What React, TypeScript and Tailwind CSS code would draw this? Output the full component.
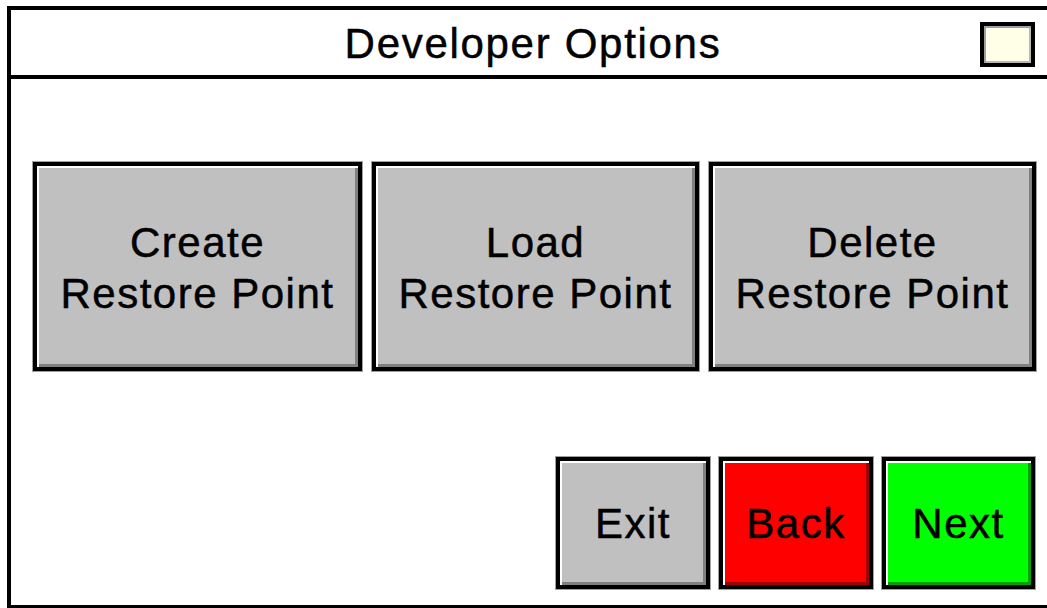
import React from "react";

const font = { fontFamily: '"Liberation Sans", Arial, sans-serif' };

function BigButton({ l1, l2, w }: { l1: string; l2: string; w: string }) {
  return (
    <div
      className={`${w} h-[209px] border-4 border-black bg-[#c0c0c0] shadow-[inset_2px_2px_0_#ffffff,inset_-3px_-3px_0_#808080,0_0_0_1px_#a0a0a0] flex items-center justify-center`}
    >
      <div className="text-center text-[42px] leading-[51px] tracking-[1.5px] text-black [-webkit-text-stroke:0.5px_black] pt-[2px]">
        <div>{l1}</div>
        <div>{l2}</div>
      </div>
    </div>
  );
}

function SmallButton({ label, cls, w }: { label: string; cls: string; w: string }) {
  return (
    <div
      className={`${w} h-[132px] border-4 border-black ${cls} flex items-center justify-center`}
    >
      <span className="text-[42px] leading-[51px] tracking-[1.5px] text-black [-webkit-text-stroke:0.5px_black]">{label}</span>
    </div>
  );
}

export default function App() {
  return (
    <div className="w-[1047px] h-[608px] bg-white overflow-hidden" style={font}>
      <div className="ml-[7px] mt-[6px] w-[1060px] h-[602px] border-l-4 border-t-4 border-b-[3px] border-black flex flex-col">
        <div className="h-[69px] border-b-4 border-black flex items-start relative">
          <div className="flex-1 text-center text-[42px] leading-[48px] tracking-[1.7px] text-black [-webkit-text-stroke:0.5px_black] pt-[10px] pr-[12px]">
            Developer Options
          </div>
          <div className="absolute left-[969px] top-[12px] w-[55px] h-[45px] border-4 border-black bg-[#ffffe8] shadow-[inset_2px_2px_0_#a0a0a0,inset_-2px_-2px_0_#b8b8b8]" />
        </div>
        <div className="flex-1 pl-[22px] pt-[83px]">
          <div className="w-[1003px]">
            <div className="flex gap-[10px]">
              <BigButton l1="Create" l2="Restore Point" w="w-[329px]" />
              <BigButton l1="Load" l2="Restore Point" w="w-[327px]" />
              <BigButton l1="Delete" l2="Restore Point" w="w-[327px]" />
            </div>
            <div className="flex justify-end gap-[9px] mt-[86px] pr-[1px]">
              <SmallButton
                label="Exit"
                w="w-[154px]"
                cls="bg-[#c0c0c0] shadow-[inset_2px_2px_0_#ffffff,inset_-3px_-3px_0_#808080,0_0_0_1px_#a0a0a0]"
              />
              <SmallButton
                label="Back"
                w="w-[154px]"
                cls="bg-[#ff0000] shadow-[inset_2px_2px_0_#ffffff,inset_-3px_-3px_0_#a00000,0_0_0_1px_#a0a0a0]"
              />
              <SmallButton
                label="Next"
                w="w-[153px]"
                cls="bg-[#00ff00] shadow-[inset_2px_2px_0_#ffffff,inset_-3px_-3px_0_#00a000,0_0_0_1px_#a0a0a0]"
              />
            </div>
          </div>
        </div>
      </div>
    </div>
  );
}
